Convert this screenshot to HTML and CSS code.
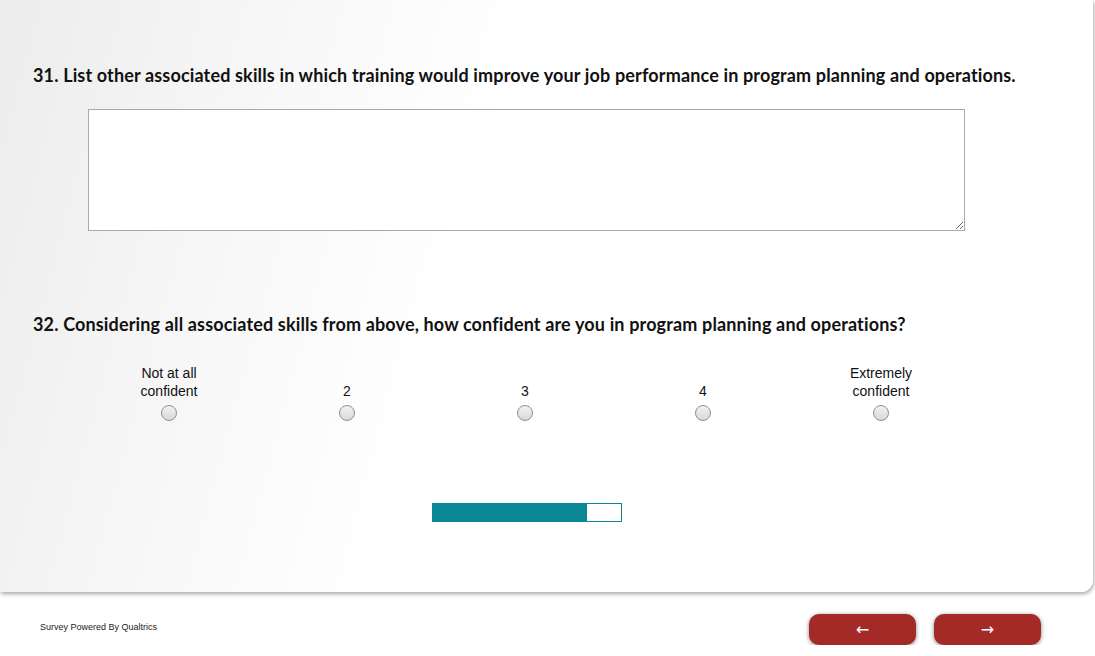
FILE: index.html
```html
<!DOCTYPE html>
<html lang="en">
<head>
    <meta charset="UTF-8">
    <title>Survey</title>
    <link rel="stylesheet" href="styles.css">
</head>
<body>
    <div class="card">
        <div class="question">
            <h3 class="q-text">31. List other associated skills in which training would improve your job performance in program planning and operations.</h3>
            <textarea class="answer"></textarea>
        </div>
        <div class="question q-scale">
            <h3 class="q-text">32. Considering all associated skills from above, how confident are you in program planning and operations?</h3>
            <div class="scale">
                <label class="choice"><span class="lbl">Not at all confident</span><span class="radio"></span></label>
                <label class="choice"><span class="lbl">2</span><span class="radio"></span></label>
                <label class="choice"><span class="lbl">3</span><span class="radio"></span></label>
                <label class="choice"><span class="lbl">4</span><span class="radio"></span></label>
                <label class="choice"><span class="lbl">Extremely confident</span><span class="radio"></span></label>
            </div>
        </div>
        <div class="progress">
            <div class="progress-fill" style="width: 82%"></div>
        </div>
    </div>
    <div class="footer">
        <div class="powered">Survey Powered By Qualtrics</div>
        <div class="nav">
            <button class="nav-btn">&larr;</button>
            <button class="nav-btn">&rarr;</button>
        </div>
    </div>
</body>
</html>
```

FILE: styles.css
```css
body {
    margin: 0;
    background-color: #fff;
    font-family: "Liberation Sans", Arial, sans-serif;
}
.card {
    width: 1093px;
    height: 592px;
    box-sizing: border-box;
    background: linear-gradient(105deg, #ececec 0%, #f6f6f6 20%, #fff 42%, #fff 100%);
    border-bottom-right-radius: 12px;
    box-shadow: 1px 2px 4px rgba(0, 0, 0, 0.35);
    padding-top: 63px;
}
.q-text {
    margin: 0 0 0 33px;
    font-family: Lato, "Open Sans", sans-serif;
    font-weight: bold;
    font-size: 18px;
    letter-spacing: 0.15px;
    color: #111;
    line-height: 24px;
}
.answer {
    display: block;
    margin: 22px 0 0 88px;
    width: 877px;
    height: 122px;
    box-sizing: border-box;
    border: 1px solid #a9a9a9;
    background: #fff;
    resize: vertical;
}
.q-scale {
    margin-top: 81px;
}
.scale {
    display: grid;
    grid-template-columns: repeat(5, 178px);
    margin: 28px 0 0 80px;
}
.choice {
    display: flex;
    flex-direction: column;
    align-items: center;
    font-size: 14px;
    color: #111;
}
.lbl {
    height: 36px;
    max-width: 80px;
    display: flex;
    align-items: flex-end;
    justify-content: center;
    text-align: center;
    line-height: 18px;
}
.radio {
    width: 14px;
    height: 14px;
    margin-top: 5px;
    border: 1px solid #8f8f8f;
    border-radius: 50%;
    background: linear-gradient(#f2f2f2, #d9d9d9);
}
.progress {
    width: 188px;
    height: 17px;
    margin: 82px 0 0 432px;
    border: 1px solid #0a8896;
    background: #fff;
}
.progress-fill {
    height: 100%;
    background: #0a8896;
}
.footer {
    display: flex;
    justify-content: space-between;
    align-items: center;
    padding: 22px 54px 0 40px;
}
.powered {
    font-size: 9px;
    color: #222;
    margin-bottom: 6px;
}
.nav {
    display: flex;
    gap: 18px;
}
.nav-btn {
    width: 107px;
    height: 31px;
    border: none;
    border-radius: 10px;
    background: #a32a26;
    color: #fff;
    font-size: 16px;
    font-family: "DejaVu Sans", sans-serif;
    box-shadow: 0 1px 4px rgba(0, 0, 0, 0.5);
}
```
